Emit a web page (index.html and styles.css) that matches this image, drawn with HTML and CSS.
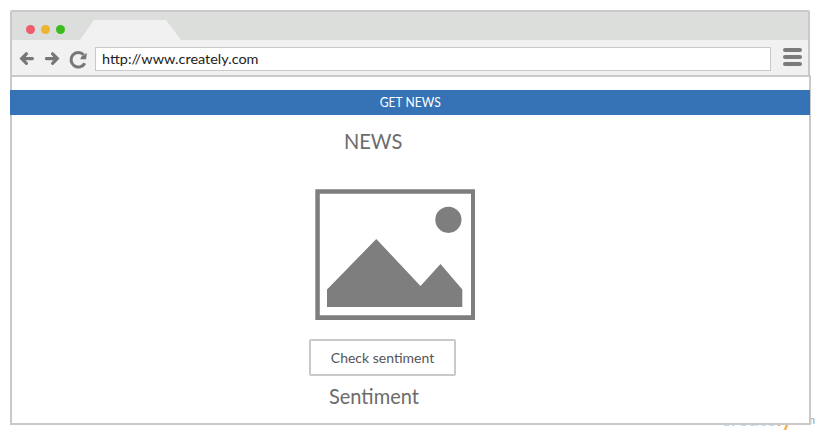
FILE: index.html
```html
<!DOCTYPE html>
<html lang="en">
<head>
<meta charset="utf-8">
<title>News</title>
<link rel="stylesheet" href="styles.css">
</head>
<body>
<div class="watermark"><span class="brand">create<span class="accent">ly</span></span><span class="domain">.com</span></div>
<main class="window">
  <header class="chrome">
    <div class="tabs">
      <div class="lights"><i class="light red"></i><i class="light amber"></i><i class="light green"></i></div>
      <div class="tab"></div>
    </div>
    <div class="toolbar">
      <svg class="nav" width="72" height="34" viewBox="0 0 72 34" fill="none" stroke="#777" stroke-width="3">
        <path d="M9.9 16.6H20.4M14.4 11.8L9.7 16.6L14.4 21.4" stroke-width="3.2" stroke-linecap="round"/>
        <path d="M34.4 16.6H45M40.6 11.8L45.3 16.6L40.6 21.4" stroke-width="3.2" stroke-linecap="round"/>
        <path d="M72.8 21.2A7.3 7.3 0 1 1 71.7 12.8"/>
        <path d="M75 11L74 17.2H68.2L69.5 14.5Z" fill="#777" stroke="none"/>
      </svg>
      <div class="address"><span>http://www.creately.com</span></div>
      <div class="menu"><i></i><i></i><i></i></div>
    </div>
  </header>
  <section class="page">
    <div class="banner"><span>GET NEWS</span></div>
    <h1 class="title">NEWS</h1>
    <svg class="picture" width="160" height="131" viewBox="0 0 160 131" fill="#7e7e7e">
      <path fill-rule="evenodd" d="M0.3 0.3H160V131H0.3ZM4.8 4.7V126.3H156V4.7Z"/>
      <circle cx="133.4" cy="30.8" r="13.1"/>
      <path d="M12 100.5L61.3 50L105.5 97L125.5 75L147.3 100.5V118H12Z"/>
    </svg>
    <button class="check">Check sentiment</button>
    <h2 class="sentiment">Sentiment</h2>
  </section>
</main>
</body>
</html>
```
FILE: styles.css
```css
* { box-sizing: border-box; }
body {
  margin: 0;
  width: 820px;
  height: 435px;
  overflow: hidden;
  background: #fff;
  font-family: Lato, sans-serif;
}
.window {
  position: relative;
  width: 801px;
  margin: 10px 0 0 10px;
}
.chrome {
  width: 800px;
  height: 67px;
  border: 2px solid #c9c9c9;
  border-radius: 2px 2px 0 0;
  background: #f1f1f1;
}
.tabs {
  display: flex;
  height: 28px;
  background: #dcdedc;
}
.lights {
  display: flex;
  gap: 6px;
  width: 68px;
  padding: 13px 0 0 14px;
}
.light {
  width: 9px;
  height: 9px;
  border-radius: 50%;
}
.red { background: #eb5d6c; }
.amber { background: #ecb52f; }
.green { background: #3bbc1c; }
.tab {
  width: 101px;
  height: 20px;
  margin-top: 8px;
  background: #f1f1f1;
  clip-path: polygon(14px 0, 86px 0, 100% 100%, 0 100%);
}
.toolbar {
  display: flex;
  height: 35px;
}
.nav {
  flex: none;
  margin: 2px 11px 0 0;
  overflow: visible;
}
.address {
  width: 676px;
  height: 24px;
  margin-top: 7px;
  padding-left: 6px;
  border: 1px solid #c9c9c9;
  background: #fff;
  color: #222;
  font-size: 14px;
  line-height: 21px;
}
.address span {
  display: inline-block;
  transform: scale(1.032, 1);
  transform-origin: 0 50%;
}
.menu {
  display: flex;
  flex-direction: column;
  gap: 3px;
  margin: 8px 0 0 12px;
}
.menu i {
  width: 19px;
  height: 4px;
  border-radius: 2px;
  background: #7b7b7b;
}
.page {
  display: flex;
  flex-direction: column;
  align-items: flex-start;
  height: 350px;
  margin-top: -2px;
  padding-top: 13px;
  border: 2px solid #c9c9c9;
  background: #fff;
  background-clip: padding-box;
}
.banner {
  flex: none;
  width: 800px;
  height: 25px;
  margin-left: -2px;
  background: #3672b6;
  color: #fff;
  font-size: 12px;
  line-height: 25px;
  text-align: center;
}
.banner span {
  display: inline-block;
  transform: scale(1.01, 1.04);
}
.title, .sentiment {
  margin: 0;
  color: #6c6c6c;
  font-size: 20px;
  font-weight: 400;
  line-height: 24px;
  transform: scaleY(1.02);
}
.title { margin: 14px 0 0 332px; }
.picture {
  flex: none;
  margin: 36px 0 0 303px;
}
.check {
  flex: none;
  width: 147px;
  height: 37px;
  margin: 19px 0 0 297px;
  padding: 0;
  border: 2px solid #c9c9c9;
  border-radius: 2px;
  background: #fff;
  color: #555;
  font: 14px/32px Lato, sans-serif;
}
.sentiment { margin: 8px 0 0 317px; }
.watermark {
  position: absolute;
  left: 721px;
  top: 406px;
  display: flex;
  line-height: 24px;
  white-space: nowrap;
}
.brand {
  color: #b8dcf2;
  font-size: 20px;
  font-weight: 700;
}
.accent { color: #f9ad4c; }
.domain {
  margin-top: 2px;
  color: #999;
  font-size: 11px;
}
```
